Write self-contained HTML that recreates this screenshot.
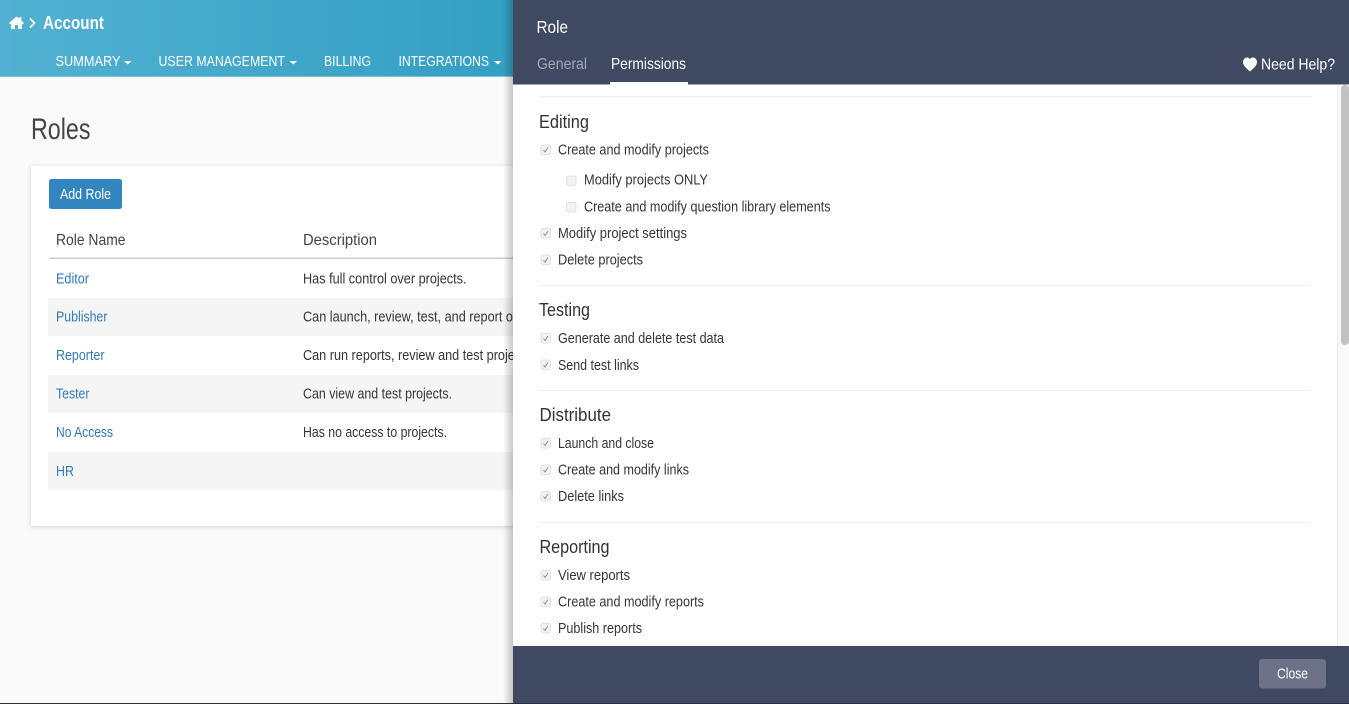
<!DOCTYPE html>
<html lang="en">
<head>
<meta charset="utf-8">
<title>Roles</title>
<style>
html,body{margin:0;padding:0;width:1349px;height:704px;overflow:hidden;background:#fafafa}
svg{display:block}
text{font-family:"Liberation Sans",Arial,sans-serif;font-size:14.4px;fill:#363636}
.nav{fill:#fff;font-size:14.6px}
.link{fill:#337ab7;font-size:14.4px}
.h{font-size:18px;fill:#333}
.th{font-size:16px;fill:#444}
.cb{fill:#f2f2f2;stroke:#e0e0e0;stroke-width:1}
.ck{fill:none;stroke:#8f8f8f;stroke-width:1}
.hr{fill:#eeeeee}
</style>
</head>
<body>
<svg width="1349" height="704" viewBox="0 0 1349 704" xmlns="http://www.w3.org/2000/svg">
<defs>
<linearGradient id="hd" x1="0" x2="1" y1="0" y2="0"><stop offset="0" stop-color="#52b1d1"/><stop offset="1" stop-color="#339fc4"/></linearGradient>
<linearGradient id="sh" x1="0" x2="1" y1="0" y2="0"><stop offset="0" stop-color="#000" stop-opacity="0"/><stop offset="1" stop-color="#000" stop-opacity=".22"/></linearGradient>
<filter id="cs" x="-5%" y="-5%" width="110%" height="110%"><feDropShadow dx="0" dy="1" stdDeviation="2.5" flood-color="#000" flood-opacity=".16"/></filter>
</defs>

<rect width="1349" height="704" fill="#fafafa"/>
<rect width="513" height="76" fill="url(#hd)"/>
<rect y="76" width="513" height="1" fill="#7cc4dc"/>

<path d="M16.5 16.5 L9 23 L10.2 24.2 L11 23.6 V29 H15 V25 H18 V29 H22 V23.6 L22.8 24.2 L24 23 L21.3 20.6 V17 H19.3 V18.9 Z" fill="#fff"/>
<path d="M30 18.5 L34.5 23 L30 27.5" fill="none" stroke="#fff" stroke-width="1.6"/>
<text x="43" y="29" textLength="61" lengthAdjust="spacingAndGlyphs" style="font-size:18.5px;font-weight:700;fill:#fff">Account</text>

<text class="nav" x="55.5" y="66" textLength="65" lengthAdjust="spacingAndGlyphs">SUMMARY</text>
<path d="M124 61 h7.5 l-3.75 3.5z" fill="#fff"/>
<text class="nav" x="158.5" y="66" textLength="126.5" lengthAdjust="spacingAndGlyphs">USER MANAGEMENT</text>
<path d="M289.500 61 h7.500 l-3.750 3.500z" fill="#fff"/>
<text class="nav" x="324" y="66" textLength="47" lengthAdjust="spacingAndGlyphs">BILLING</text>
<text class="nav" x="398.500" y="66" textLength="90.500" lengthAdjust="spacingAndGlyphs">INTEGRATIONS</text>
<path d="M494 61 h7.500 l-3.750 3.500z" fill="#fff"/>

<text x="31" y="139" textLength="59.500" lengthAdjust="spacingAndGlyphs" style="font-size:30px;fill:#444">Roles</text>

<rect x="31" y="166" width="490" height="360" fill="#fff" filter="url(#cs)"/>
<rect x="49" y="179" width="73" height="30" rx="2.500" fill="#3385bf"/>
<text x="60" y="199" textLength="51" lengthAdjust="spacingAndGlyphs" style="fill:#fff">Add Role</text>

<text class="th" x="56" y="245" textLength="69.500" lengthAdjust="spacingAndGlyphs">Role Name</text>
<text class="th" x="303" y="245" textLength="74" lengthAdjust="spacingAndGlyphs">Description</text>
<rect x="49" y="257.500" width="472" height="1.500" fill="#cccccc"/>

<rect x="48" y="298" width="473" height="38" fill="#f5f5f5"/>
<rect x="48" y="375" width="473" height="38" fill="#f5f5f5"/>
<rect x="48" y="452" width="473" height="38" fill="#f5f5f5"/>

<text class="link" x="56" y="283.500" textLength="33" lengthAdjust="spacingAndGlyphs">Editor</text>
<text x="303" y="283.500" textLength="163.500" lengthAdjust="spacingAndGlyphs">Has full control over projects.</text>
<text class="link" x="56" y="321.500" textLength="51.500" lengthAdjust="spacingAndGlyphs">Publisher</text>
<text x="303" y="321.500" textLength="217" lengthAdjust="spacingAndGlyphs">Can launch, review, test, and report on</text>
<text class="link" x="56" y="360" textLength="48.500" lengthAdjust="spacingAndGlyphs">Reporter</text>
<text x="303" y="360" textLength="228" lengthAdjust="spacingAndGlyphs">Can run reports, review and test projects</text>
<text class="link" x="56" y="398.500" textLength="33.500" lengthAdjust="spacingAndGlyphs">Tester</text>
<text x="303" y="398.500" textLength="149" lengthAdjust="spacingAndGlyphs">Can view and test projects.</text>
<text class="link" x="56" y="437" textLength="57" lengthAdjust="spacingAndGlyphs">No Access</text>
<text x="303" y="437" textLength="144" lengthAdjust="spacingAndGlyphs">Has no access to projects.</text>
<text class="link" x="56" y="476" textLength="18" lengthAdjust="spacingAndGlyphs">HR</text>

<rect x="503" y="0" width="10" height="704" fill="url(#sh)"/>

<rect x="513" y="0" width="836" height="704" fill="#fff"/>
<rect x="513" y="0" width="836" height="84.500" fill="#3f4961"/>
<text x="536.500" y="33" textLength="31.500" lengthAdjust="spacingAndGlyphs" style="font-size:17.500px;fill:#fff">Role</text>
<text x="537" y="69" textLength="50" lengthAdjust="spacingAndGlyphs" style="font-size:16px;fill:#a5a9b4">General</text>
<text x="611" y="69" textLength="75" lengthAdjust="spacingAndGlyphs" style="font-size:16px;fill:#fff">Permissions</text>
<rect x="610" y="82" width="78" height="2.500" fill="#fff"/>
<path d="M1250 71.500 C1246 68 1243 65.500 1243 62 C1243 59.500 1245 57.500 1247 57.500 C1248.300 57.500 1249.400 58.100 1250 59.200 C1250.600 58.100 1251.700 57.500 1253 57.500 C1255 57.500 1257 59.500 1257 62 C1257 65.500 1254 68 1250 71.500Z" fill="#fff"/>
<text x="1261" y="69.500" textLength="74" lengthAdjust="spacingAndGlyphs" style="font-size:16px;fill:#fff">Need Help?</text>

<rect class="hr" x="539" y="96" width="772" height="1"/>
<text class="h" x="539" y="128" textLength="50" lengthAdjust="spacingAndGlyphs">Editing</text>

<rect class="cb" x="541" y="145" width="9.500" height="9.500" rx="2"/><path class="ck" d="M543.500 150 l1.500 2 l3 -4.500"/>
<text x="558" y="154.500" textLength="151" lengthAdjust="spacingAndGlyphs">Create and modify projects</text>
<rect class="cb" x="566.500" y="176" width="9.500" height="9.500" rx="2"/>
<text x="584" y="184.500" textLength="124" lengthAdjust="spacingAndGlyphs">Modify projects ONLY</text>
<rect class="cb" x="566.500" y="202.500" width="9.500" height="9.500" rx="2"/>
<text x="584" y="211.500" textLength="246.500" lengthAdjust="spacingAndGlyphs">Create and modify question library elements</text>
<rect class="cb" x="541" y="228.500" width="9.500" height="9.500" rx="2"/><path class="ck" d="M543.500 233.500 l1.500 2 l3 -4.500"/>
<text x="558" y="238" textLength="129" lengthAdjust="spacingAndGlyphs">Modify project settings</text>
<rect class="cb" x="541" y="255" width="9.500" height="9.500" rx="2"/><path class="ck" d="M543.500 260 l1.500 2 l3 -4.500"/>
<text x="558" y="264.500" textLength="85" lengthAdjust="spacingAndGlyphs">Delete projects</text>

<rect class="hr" x="539" y="285" width="772" height="1"/>
<text class="h" x="539" y="316" textLength="51" lengthAdjust="spacingAndGlyphs">Testing</text>
<rect class="cb" x="541" y="333.500" width="9.500" height="9.500" rx="2"/><path class="ck" d="M543.500 338.500 l1.500 2 l3 -4.500"/>
<text x="558" y="343" textLength="166" lengthAdjust="spacingAndGlyphs">Generate and delete test data</text>
<rect class="cb" x="541" y="360" width="9.500" height="9.500" rx="2"/><path class="ck" d="M543.500 365 l1.500 2 l3 -4.500"/>
<text x="558" y="370" textLength="81" lengthAdjust="spacingAndGlyphs">Send test links</text>

<rect class="hr" x="539" y="390" width="772" height="1"/>
<text class="h" x="539.500" y="421" textLength="71.500" lengthAdjust="spacingAndGlyphs">Distribute</text>
<rect class="cb" x="541" y="438.500" width="9.500" height="9.500" rx="2"/><path class="ck" d="M543.500 443.500 l1.500 2 l3 -4.500"/>
<text x="558" y="448" textLength="96" lengthAdjust="spacingAndGlyphs">Launch and close</text>
<rect class="cb" x="541" y="465" width="9.500" height="9.500" rx="2"/><path class="ck" d="M543.500 470 l1.500 2 l3 -4.500"/>
<text x="558" y="474.500" textLength="131" lengthAdjust="spacingAndGlyphs">Create and modify links</text>
<rect class="cb" x="541" y="491.500" width="9.500" height="9.500" rx="2"/><path class="ck" d="M543.500 496.500 l1.500 2 l3 -4.500"/>
<text x="558" y="501" textLength="66" lengthAdjust="spacingAndGlyphs">Delete links</text>

<rect class="hr" x="539" y="522" width="772" height="1"/>
<text class="h" x="539.500" y="553" textLength="70" lengthAdjust="spacingAndGlyphs">Reporting</text>
<rect class="cb" x="541" y="570.500" width="9.500" height="9.500" rx="2"/><path class="ck" d="M543.500 575.500 l1.500 2 l3 -4.500"/>
<text x="558" y="580" textLength="72" lengthAdjust="spacingAndGlyphs">View reports</text>
<rect class="cb" x="541" y="597" width="9.500" height="9.500" rx="2"/><path class="ck" d="M543.500 602 l1.500 2 l3 -4.500"/>
<text x="558" y="606.500" textLength="146" lengthAdjust="spacingAndGlyphs">Create and modify reports</text>
<rect class="cb" x="541" y="623.500" width="9.500" height="9.500" rx="2"/><path class="ck" d="M543.500 628.500 l1.500 2 l3 -4.500"/>
<text x="558" y="633" textLength="84" lengthAdjust="spacingAndGlyphs">Publish reports</text>

<rect x="1337" y="85" width="12" height="561" fill="#f9f9f9"/>
<rect x="1337" y="85" width="1" height="561" fill="#ececec"/>
<rect x="1341" y="85" width="8" height="260" rx="4" fill="#c1c1c1"/>

<rect x="513" y="646" width="836" height="58" fill="#3f4961"/>
<rect x="1259" y="659" width="67" height="29.500" rx="3" fill="#6b7186"/>
<text x="1277" y="678.500" textLength="31" lengthAdjust="spacingAndGlyphs" style="fill:#fff">Close</text>
<rect x="0" y="703" width="1349" height="1" fill="#2a2f3a"/>
</svg>
</body>
</html>
